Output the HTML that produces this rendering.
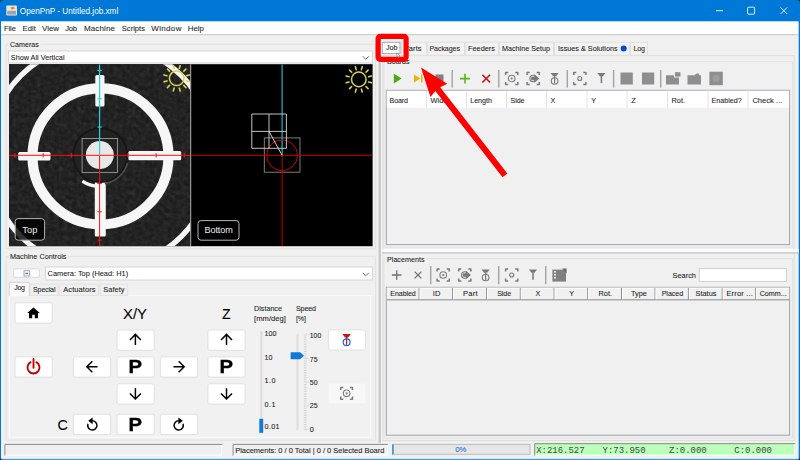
<!DOCTYPE html>
<html lang="en"><head><meta charset="utf-8"><title>OpenPnP - Untitled.job.xml</title>
<style>
html,body{margin:0;padding:0}
body{width:800px;height:460px;position:relative;overflow:hidden;background:#f0f0f0;font-family:"Liberation Sans",sans-serif}
.t{position:absolute;white-space:nowrap;z-index:3;-webkit-text-stroke:0.08px currentColor}
.m{font-family:"Liberation Mono",monospace}
.a{position:absolute}
svg{position:absolute;left:0;top:0}
</style></head><body>
<svg width="800" height="460" viewBox="0 0 800 460" style="z-index:1"><rect x="0.00" y="0.00" width="800.00" height="21.50" fill="#0078d7" />
<rect x="1.00" y="21.50" width="797.70" height="12.70" fill="#ffffff" />
<rect x="1.00" y="34.20" width="797.70" height="1.00" fill="#c6c6c6" />
<rect x="0.00" y="21.00" width="1.00" height="439.00" fill="#0078d7" />
<rect x="798.70" y="21.00" width="1.30" height="439.00" fill="#0078d7" />
<rect x="0.00" y="458.90" width="800.00" height="1.10" fill="#3d96e0" />
<rect x="6.30" y="5.60" width="10.70" height="10.00" fill="#e9e6e0" rx="1" />
<rect x="7.30" y="10.80" width="8.70" height="3.80" fill="#9aa3b2" />
<path d="M10.3 7.4 l3.2-1 1.5 2 -3.2 1.3z" fill="#f08a24"/>
<line x1="716.00" y1="10.70" x2="723.00" y2="10.70" stroke="#ffffff" stroke-width="0.9" />
<rect x="747.60" y="7.20" width="7.00" height="7.00" fill="none" stroke="#ffffff" stroke-width="0.9" rx="1" />
<path d="M780.6 7.4l6.6 6.6m0-6.6l-6.6 6.6" stroke="#fff" stroke-width="0.9" fill="none"/>
<rect x="378.60" y="36.00" width="2.60" height="407.00" fill="#c9c9c9" />
<rect x="381.20" y="36.00" width="1.00" height="407.00" fill="#fafafa" />
<path d="M8.5 44.2H6.2V248.8H375.6V44.2H40.5" fill="none" stroke="#e2e2e2" stroke-width="1"/>
<path d="M8.5 256.4H6.2V440.2H375.6V256.4H68" fill="none" stroke="#e2e2e2" stroke-width="1"/>
<rect x="8.60" y="51.00" width="364.00" height="11.90" fill="#ffffff" stroke="#d6d6d6" stroke-width="1" />
<path d="M362.8 56.3l3 3 3-3" fill="none" stroke="#555" stroke-width="0.9"/>
<rect x="45.40" y="267.00" width="327.20" height="13.00" fill="#ffffff" stroke="#d6d6d6" stroke-width="1" />
<path d="M362.8 272.8l3 3 3-3" fill="none" stroke="#555" stroke-width="0.9"/>
<rect x="13.60" y="268.80" width="25.80" height="8.60" fill="#fdfdfd" stroke="#dadada" stroke-width="1" rx="1.5" />
<rect x="24.00" y="270.70" width="5.40" height="5.30" fill="#f1f3f8" stroke="#8e98b0" stroke-width="0.8" />
<line x1="25.40" y1="273.40" x2="28.00" y2="273.40" stroke="#3a4a80" stroke-width="0.9" />
<rect x="9.30" y="295.60" width="361.30" height="141.70" fill="#f1f1f1" stroke="#fafafa" stroke-width="1.2" />
<rect x="30.00" y="284.20" width="28.20" height="11.20" fill="#f0f0f0" stroke="#e2e2e2" stroke-width="1" />
<rect x="59.60" y="284.20" width="39.00" height="11.20" fill="#f0f0f0" stroke="#e2e2e2" stroke-width="1" />
<rect x="100.00" y="284.20" width="27.60" height="11.20" fill="#f0f0f0" stroke="#e2e2e2" stroke-width="1" />
<path d="M9.3 296V282.3H29.3V296" fill="#fbfbfb" stroke="#d4d4d4" stroke-width="1"/>
<rect x="15.00" y="302.80" width="37.20" height="20.30" fill="#ffffff" stroke="#e0e0e0" stroke-width="1" rx="2" />
<rect x="15.00" y="356.80" width="37.20" height="20.30" fill="#ffffff" stroke="#e0e0e0" stroke-width="1" rx="2" />
<rect x="117.00" y="330.00" width="37.20" height="20.30" fill="#ffffff" stroke="#e0e0e0" stroke-width="1" rx="2" />
<rect x="73.40" y="356.80" width="37.20" height="20.30" fill="#ffffff" stroke="#e0e0e0" stroke-width="1" rx="2" />
<rect x="117.00" y="356.80" width="37.20" height="20.30" fill="#ffffff" stroke="#e0e0e0" stroke-width="1" rx="2" />
<rect x="160.40" y="356.80" width="37.20" height="20.30" fill="#ffffff" stroke="#e0e0e0" stroke-width="1" rx="2" />
<rect x="117.00" y="383.80" width="37.20" height="20.30" fill="#ffffff" stroke="#e0e0e0" stroke-width="1" rx="2" />
<rect x="73.40" y="414.30" width="37.20" height="20.30" fill="#ffffff" stroke="#e0e0e0" stroke-width="1" rx="2" />
<rect x="117.00" y="414.30" width="37.20" height="20.30" fill="#ffffff" stroke="#e0e0e0" stroke-width="1" rx="2" />
<rect x="160.40" y="414.30" width="37.20" height="20.30" fill="#ffffff" stroke="#e0e0e0" stroke-width="1" rx="2" />
<rect x="207.90" y="330.00" width="37.20" height="20.30" fill="#ffffff" stroke="#e0e0e0" stroke-width="1" rx="2" />
<rect x="207.90" y="356.80" width="37.20" height="20.30" fill="#ffffff" stroke="#e0e0e0" stroke-width="1" rx="2" />
<rect x="207.90" y="383.80" width="37.20" height="20.30" fill="#ffffff" stroke="#e0e0e0" stroke-width="1" rx="2" />
<rect x="328.40" y="329.80" width="37.20" height="20.30" fill="#ffffff" stroke="#e0e0e0" stroke-width="1" rx="2" />
<rect x="328.40" y="383.50" width="37.10" height="19.90" fill="#f8f8f8" rx="2" />
<path d="M33.5 307.4l-6.3 5.6h1.8v5.3h3.2v-3.6h2.6v3.6h3.2v-5.3h1.8z" fill="#000"/>
<path d="M30.6 362.2a6 6 0 1 0 5.8 0" fill="none" stroke="#c40000" stroke-width="1.9" stroke-linecap="round"/>
<line x1="33.50" y1="359.00" x2="33.50" y2="367.80" stroke="#c40000" stroke-width="1.9" stroke-linecap="round"/>
<path d="M135.4 345.1V334.70000000000005M129.9 339.90000000000003L135.4 334.40000000000003L140.9 339.90000000000003" fill="none" stroke="#000" stroke-width="1.45"/>
<path d="M135.4 388.3V398.7M129.9 393.5L135.4 399.0L140.9 393.5" fill="none" stroke="#000" stroke-width="1.45"/>
<path d="M97.5 366.8H87.1M92.3 361.3L86.8 366.8L92.3 372.3" fill="none" stroke="#000" stroke-width="1.45"/>
<path d="M173.5 366.8H183.9M178.7 361.3L184.2 366.8L178.7 372.3" fill="none" stroke="#000" stroke-width="1.45"/>
<path d="M226.5 345.1V334.70000000000005M221.0 339.90000000000003L226.5 334.40000000000003L232.0 339.90000000000003" fill="none" stroke="#000" stroke-width="1.45"/>
<path d="M226.5 388.3V398.7M221.0 393.5L226.5 399.0L232.0 393.5" fill="none" stroke="#000" stroke-width="1.45"/>
<path d="M92.2 420.79999999999995A4.6 4.6 0 1 1 88.0 423.79999999999995" fill="none" stroke="#000" stroke-width="1.5"/>
<path d="M92.6 417.4v6.8l-4.4-3.4z" fill="#000"/>
<path d="M178.8 420.79999999999995A4.6 4.6 0 1 0 183.0 423.79999999999995" fill="none" stroke="#000" stroke-width="1.5"/>
<path d="M178.4 417.4v6.8l4.4-3.4z" fill="#000"/>
<path d="M342.4 334h8.4l-2.6 3.4h-3.2z" fill="#cc1111"/>
<line x1="346.60" y1="337.00" x2="346.60" y2="344.80" stroke="#cc1111" stroke-width="1.3" />
<circle cx="346.6" cy="342.2" r="3.4" fill="none" stroke="#1565e0" stroke-width="1.2"/>
<path d="M340.70 390.00V387.40H343.30M340.70 396.60V399.20H343.30M352.50 390.00V387.40H349.90M352.50 396.60V399.20H349.90" fill="none" stroke="#7c7c7c" stroke-width="1.5" stroke-linejoin="round"/>
<circle cx="346.6" cy="393.3" r="3.3" fill="none" stroke="#7c7c7c" stroke-width="1.1"/>
<circle cx="346.6" cy="393.3" r="1.1" fill="#7c7c7c"/>
<rect x="260.20" y="331.50" width="2.20" height="101.30" fill="#dcdcdc" />
<rect x="259.30" y="418.80" width="3.90" height="14.00" fill="#0f7ad8" />
<rect x="296.40" y="334.30" width="2.20" height="95.90" fill="#dedede" />
<line x1="303.80" y1="334.90" x2="308.20" y2="334.90" stroke="#c2c2c2" stroke-width="0.7" />
<line x1="303.80" y1="337.26" x2="306.60" y2="337.26" stroke="#c2c2c2" stroke-width="0.7" />
<line x1="303.80" y1="339.62" x2="306.60" y2="339.62" stroke="#c2c2c2" stroke-width="0.7" />
<line x1="303.80" y1="341.99" x2="306.60" y2="341.99" stroke="#c2c2c2" stroke-width="0.7" />
<line x1="303.80" y1="344.35" x2="306.60" y2="344.35" stroke="#c2c2c2" stroke-width="0.7" />
<line x1="303.80" y1="346.71" x2="306.60" y2="346.71" stroke="#c2c2c2" stroke-width="0.7" />
<line x1="303.80" y1="349.07" x2="306.60" y2="349.07" stroke="#c2c2c2" stroke-width="0.7" />
<line x1="303.80" y1="351.44" x2="306.60" y2="351.44" stroke="#c2c2c2" stroke-width="0.7" />
<line x1="303.80" y1="353.80" x2="306.60" y2="353.80" stroke="#c2c2c2" stroke-width="0.7" />
<line x1="303.80" y1="356.16" x2="306.60" y2="356.16" stroke="#c2c2c2" stroke-width="0.7" />
<line x1="303.80" y1="358.52" x2="308.20" y2="358.52" stroke="#c2c2c2" stroke-width="0.7" />
<line x1="303.80" y1="360.89" x2="306.60" y2="360.89" stroke="#c2c2c2" stroke-width="0.7" />
<line x1="303.80" y1="363.25" x2="306.60" y2="363.25" stroke="#c2c2c2" stroke-width="0.7" />
<line x1="303.80" y1="365.61" x2="306.60" y2="365.61" stroke="#c2c2c2" stroke-width="0.7" />
<line x1="303.80" y1="367.97" x2="306.60" y2="367.97" stroke="#c2c2c2" stroke-width="0.7" />
<line x1="303.80" y1="370.34" x2="306.60" y2="370.34" stroke="#c2c2c2" stroke-width="0.7" />
<line x1="303.80" y1="372.70" x2="306.60" y2="372.70" stroke="#c2c2c2" stroke-width="0.7" />
<line x1="303.80" y1="375.06" x2="306.60" y2="375.06" stroke="#c2c2c2" stroke-width="0.7" />
<line x1="303.80" y1="377.42" x2="306.60" y2="377.42" stroke="#c2c2c2" stroke-width="0.7" />
<line x1="303.80" y1="379.79" x2="306.60" y2="379.79" stroke="#c2c2c2" stroke-width="0.7" />
<line x1="303.80" y1="382.15" x2="308.20" y2="382.15" stroke="#c2c2c2" stroke-width="0.7" />
<line x1="303.80" y1="384.51" x2="306.60" y2="384.51" stroke="#c2c2c2" stroke-width="0.7" />
<line x1="303.80" y1="386.88" x2="306.60" y2="386.88" stroke="#c2c2c2" stroke-width="0.7" />
<line x1="303.80" y1="389.24" x2="306.60" y2="389.24" stroke="#c2c2c2" stroke-width="0.7" />
<line x1="303.80" y1="391.60" x2="306.60" y2="391.60" stroke="#c2c2c2" stroke-width="0.7" />
<line x1="303.80" y1="393.96" x2="306.60" y2="393.96" stroke="#c2c2c2" stroke-width="0.7" />
<line x1="303.80" y1="396.32" x2="306.60" y2="396.32" stroke="#c2c2c2" stroke-width="0.7" />
<line x1="303.80" y1="398.69" x2="306.60" y2="398.69" stroke="#c2c2c2" stroke-width="0.7" />
<line x1="303.80" y1="401.05" x2="306.60" y2="401.05" stroke="#c2c2c2" stroke-width="0.7" />
<line x1="303.80" y1="403.41" x2="306.60" y2="403.41" stroke="#c2c2c2" stroke-width="0.7" />
<line x1="303.80" y1="405.77" x2="308.20" y2="405.77" stroke="#c2c2c2" stroke-width="0.7" />
<line x1="303.80" y1="408.14" x2="306.60" y2="408.14" stroke="#c2c2c2" stroke-width="0.7" />
<line x1="303.80" y1="410.50" x2="306.60" y2="410.50" stroke="#c2c2c2" stroke-width="0.7" />
<line x1="303.80" y1="412.86" x2="306.60" y2="412.86" stroke="#c2c2c2" stroke-width="0.7" />
<line x1="303.80" y1="415.22" x2="306.60" y2="415.22" stroke="#c2c2c2" stroke-width="0.7" />
<line x1="303.80" y1="417.59" x2="306.60" y2="417.59" stroke="#c2c2c2" stroke-width="0.7" />
<line x1="303.80" y1="419.95" x2="306.60" y2="419.95" stroke="#c2c2c2" stroke-width="0.7" />
<line x1="303.80" y1="422.31" x2="306.60" y2="422.31" stroke="#c2c2c2" stroke-width="0.7" />
<line x1="303.80" y1="424.67" x2="306.60" y2="424.67" stroke="#c2c2c2" stroke-width="0.7" />
<line x1="303.80" y1="427.04" x2="306.60" y2="427.04" stroke="#c2c2c2" stroke-width="0.7" />
<line x1="303.80" y1="429.40" x2="308.20" y2="429.40" stroke="#c2c2c2" stroke-width="0.7" />
<path d="M290.6 352.2h9.6l3.8 3.5-3.8 3.5h-9.6z" fill="#0f7ad8"/>
<rect x="382.80" y="55.60" width="411.40" height="385.00" fill="none" stroke="#dedede" stroke-width="1" />
<rect x="401.50" y="42.30" width="25.00" height="13.00" fill="#f2f2f2" stroke="#e0e0e0" stroke-width="1" />
<rect x="427.50" y="42.30" width="37.00" height="13.00" fill="#f2f2f2" stroke="#e0e0e0" stroke-width="1" />
<rect x="465.50" y="42.30" width="33.00" height="13.00" fill="#f2f2f2" stroke="#e0e0e0" stroke-width="1" />
<rect x="499.50" y="42.30" width="54.00" height="13.00" fill="#f2f2f2" stroke="#e0e0e0" stroke-width="1" />
<rect x="554.50" y="42.30" width="75.00" height="13.00" fill="#f2f2f2" stroke="#e0e0e0" stroke-width="1" />
<rect x="630.50" y="42.30" width="17.00" height="13.00" fill="#f2f2f2" stroke="#e0e0e0" stroke-width="1" />
<rect x="382.30" y="42.30" width="17.70" height="11.30" fill="#fcfcfc" stroke="#a9a9a9" stroke-width="1" />
<circle cx="623.7" cy="48.6" r="3" fill="#0b45d8"/>
<path d="M386.5 61.6H384V247.2H792.6V61.6H411" fill="none" stroke="#e2e2e2" stroke-width="1"/>
<path d="M393.8 73.8l7.8 4.8-7.8 4.9z" fill="#4aa814"/>
<path d="M414 74.4l6.4 4.1-6.4 4.1z" fill="#e4b800"/>
<rect x="421.00" y="74.40" width="1.50" height="8.20" fill="#e4b800" />
<rect x="435.50" y="74.50" width="8.00" height="8.00" fill="#7f7f7f" />
<rect x="451.50" y="70.00" width="1.40" height="17.60" fill="#a3a3a3" />
<rect x="498.10" y="70.00" width="1.40" height="17.60" fill="#a3a3a3" />
<rect x="566.60" y="70.00" width="1.40" height="17.60" fill="#a3a3a3" />
<rect x="612.90" y="70.00" width="1.40" height="17.60" fill="#a3a3a3" />
<rect x="660.00" y="70.00" width="1.40" height="17.60" fill="#a3a3a3" />
<path d="M460 78.6h10M465 73.7v9.8" stroke="#5ab517" stroke-width="1.6" fill="none"/>
<path d="M482.4 74.8l7.7 7.7m0-7.7l-7.7 7.7" stroke="#c5141d" stroke-width="1.6" fill="none"/>
<path d="M505.60 75.00V72.40H508.20M505.60 82.00V84.60H508.20M517.80 75.00V72.40H515.20M517.80 82.00V84.60H515.20" fill="none" stroke="#7a7a7a" stroke-width="1.5" stroke-linejoin="round"/>
<circle cx="511.7" cy="78.5" r="3.3" fill="none" stroke="#7a7a7a" stroke-width="1.1"/>
<circle cx="511.7" cy="78.5" r="1.1" fill="#7a7a7a"/>
<path d="M527.10 75.00V72.40H529.70M527.10 82.00V84.60H529.70M539.30 75.00V72.40H536.70M539.30 82.00V84.60H536.70" fill="none" stroke="#7a7a7a" stroke-width="1.5" stroke-linejoin="round"/>
<circle cx="533.2" cy="78.5" r="3.3" fill="none" stroke="#7a7a7a" stroke-width="1.1"/>
<path d="M534.2 74.2v2.6h-3v3.4h3v2.6l5.2-4.3z" fill="#7a7a7a"/>
<path d="M550.5 73h8.2l-2.6 3.3h-3z" fill="#7a7a7a"/>
<line x1="554.60" y1="76.00" x2="554.60" y2="83.40" stroke="#7a7a7a" stroke-width="1.2" />
<circle cx="554.6" cy="81" r="3.3" fill="none" stroke="#7a7a7a" stroke-width="1.1"/>
<path d="M573.70 75.00V72.40H576.30M573.70 82.00V84.60H576.30M585.90 75.00V72.40H583.30M585.90 82.00V84.60H583.30" fill="none" stroke="#7a7a7a" stroke-width="1.5" stroke-linejoin="round"/>
<circle cx="579.8" cy="78.5" r="2" fill="none" stroke="#7a7a7a" stroke-width="1.1"/>
<path d="M597.3 73h8.2l-2.6 3.3h-3z" fill="#7a7a7a"/>
<line x1="601.40" y1="76.00" x2="601.40" y2="83.20" stroke="#7a7a7a" stroke-width="1.5" />
<rect x="620.50" y="72.50" width="12.30" height="12.00" fill="#8e8e8e" />
<rect x="642.00" y="72.50" width="12.20" height="12.00" fill="#8e8e8e" />
<path d="M666 75.2h8v2.4h5v6.9h-13z" fill="#8e8e8e"/>
<rect x="675.00" y="72.20" width="5.50" height="4.40" fill="#8e8e8e" />
<path d="M687.5 75.2h7l2-1.6h2.5v1.6h2v9.3h-13.5z" fill="#8e8e8e"/>
<rect x="709.40" y="71.70" width="13.40" height="13.50" fill="#8e8e8e" />
<circle cx="716.1" cy="78.4" r="3.6" fill="#9c9c9c"/>
<rect x="386.30" y="90.30" width="403.30" height="154.30" fill="#f0f0f0" stroke="#9fa3ab" stroke-width="1" />
<rect x="386.80" y="90.80" width="402.30" height="17.00" fill="#ffffff" />
<rect x="426.20" y="90.80" width="1.00" height="17.00" fill="#e3e3e3" />
<rect x="466.00" y="90.80" width="1.00" height="17.00" fill="#e3e3e3" />
<rect x="506.10" y="90.80" width="1.00" height="17.00" fill="#e3e3e3" />
<rect x="546.10" y="90.80" width="1.00" height="17.00" fill="#e3e3e3" />
<rect x="586.50" y="90.80" width="1.00" height="17.00" fill="#e3e3e3" />
<rect x="626.50" y="90.80" width="1.00" height="17.00" fill="#e3e3e3" />
<rect x="667.10" y="90.80" width="1.00" height="17.00" fill="#e3e3e3" />
<rect x="707.50" y="90.80" width="1.00" height="17.00" fill="#e3e3e3" />
<rect x="747.50" y="90.80" width="1.00" height="17.00" fill="#e3e3e3" />
<rect x="382.20" y="249.00" width="416.50" height="3.40" fill="#fafafa" />
<rect x="382.20" y="252.40" width="416.50" height="1.10" fill="#bdbdbd" />
<path d="M386.5 258.6H384V438H792.6V258.6H427" fill="none" stroke="#e2e2e2" stroke-width="1"/>
<path d="M391.9 275h9.6M396.7 270.2v9.6" stroke="#6f6f6f" stroke-width="1.3" fill="none"/>
<path d="M414.6 271.6l6.8 6.8m0-6.8l-6.8 6.8" stroke="#6f6f6f" stroke-width="1.3" fill="none"/>
<rect x="430.00" y="266.00" width="1.40" height="18.20" fill="#a3a3a3" />
<rect x="498.00" y="266.00" width="1.40" height="18.20" fill="#a3a3a3" />
<rect x="545.00" y="266.00" width="1.40" height="18.20" fill="#a3a3a3" />
<path d="M437.10 271.50V268.90H439.70M437.10 278.50V281.10H439.70M449.30 271.50V268.90H446.70M449.30 278.50V281.10H446.70" fill="none" stroke="#7a7a7a" stroke-width="1.5" stroke-linejoin="round"/>
<circle cx="443.2" cy="275" r="3.3" fill="none" stroke="#7a7a7a" stroke-width="1.1"/>
<circle cx="443.2" cy="275" r="1.1" fill="#7a7a7a"/>
<path d="M458.70 271.50V268.90H461.30M458.70 278.50V281.10H461.30M470.90 271.50V268.90H468.30M470.90 278.50V281.10H468.30" fill="none" stroke="#7a7a7a" stroke-width="1.5" stroke-linejoin="round"/>
<circle cx="464.8" cy="275" r="3.3" fill="none" stroke="#7a7a7a" stroke-width="1.1"/>
<path d="M465.8 270.7v2.6h-3v3.4h3v2.6l5.2-4.3z" fill="#7a7a7a"/>
<path d="M481.5 269.5h8.2l-2.6 3.3h-3z" fill="#7a7a7a"/>
<line x1="485.60" y1="272.50" x2="485.60" y2="279.90" stroke="#7a7a7a" stroke-width="1.2" />
<circle cx="485.6" cy="277.5" r="3.3" fill="none" stroke="#7a7a7a" stroke-width="1.1"/>
<path d="M505.60 271.50V268.90H508.20M505.60 278.50V281.10H508.20M517.80 271.50V268.90H515.20M517.80 278.50V281.10H515.20" fill="none" stroke="#7a7a7a" stroke-width="1.5" stroke-linejoin="round"/>
<circle cx="511.7" cy="275" r="2" fill="none" stroke="#7a7a7a" stroke-width="1.1"/>
<path d="M528.9 269.5h8.2l-2.6 3.3h-3z" fill="#7a7a7a"/>
<line x1="533.00" y1="272.50" x2="533.00" y2="279.70" stroke="#7a7a7a" stroke-width="1.5" />
<rect x="552.40" y="269.60" width="13.60" height="12.00" fill="#808080" />
<path d="M562 268.6h4.6v4.6z" fill="#6a6a6a"/>
<rect x="554.00" y="271.00" width="2.00" height="1.60" fill="#e8e8e8" />
<rect x="554.00" y="274.00" width="2.00" height="1.60" fill="#e8e8e8" />
<rect x="554.00" y="277.00" width="2.00" height="1.60" fill="#e8e8e8" />
<rect x="699.20" y="268.60" width="87.20" height="12.80" fill="#ffffff" stroke="#cfcfcf" stroke-width="1" />
<rect x="386.30" y="287.30" width="403.30" height="147.90" fill="#f0f0f0" stroke="#9fa3ab" stroke-width="1" />
<rect x="386.80" y="287.80" width="402.30" height="12.00" fill="#f1f1f1" />
<rect x="386.80" y="299.30" width="402.30" height="1.00" fill="#8c8c8c" />
<rect x="386.80" y="287.80" width="402.30" height="0.80" fill="#ffffff" />
<rect x="418.60" y="288.00" width="1.00" height="12.00" fill="#8c8c8c" />
<rect x="419.60" y="288.00" width="0.90" height="11.40" fill="#ffffff" />
<rect x="452.10" y="288.00" width="1.00" height="12.00" fill="#8c8c8c" />
<rect x="453.10" y="288.00" width="0.90" height="11.40" fill="#ffffff" />
<rect x="486.10" y="288.00" width="1.00" height="12.00" fill="#8c8c8c" />
<rect x="487.10" y="288.00" width="0.90" height="11.40" fill="#ffffff" />
<rect x="519.80" y="288.00" width="1.00" height="12.00" fill="#8c8c8c" />
<rect x="520.80" y="288.00" width="0.90" height="11.40" fill="#ffffff" />
<rect x="553.60" y="288.00" width="1.00" height="12.00" fill="#8c8c8c" />
<rect x="554.60" y="288.00" width="0.90" height="11.40" fill="#ffffff" />
<rect x="587.20" y="288.00" width="1.00" height="12.00" fill="#8c8c8c" />
<rect x="588.20" y="288.00" width="0.90" height="11.40" fill="#ffffff" />
<rect x="621.00" y="288.00" width="1.00" height="12.00" fill="#8c8c8c" />
<rect x="622.00" y="288.00" width="0.90" height="11.40" fill="#ffffff" />
<rect x="654.50" y="288.00" width="1.00" height="12.00" fill="#8c8c8c" />
<rect x="655.50" y="288.00" width="0.90" height="11.40" fill="#ffffff" />
<rect x="687.90" y="288.00" width="1.00" height="12.00" fill="#8c8c8c" />
<rect x="688.90" y="288.00" width="0.90" height="11.40" fill="#ffffff" />
<rect x="721.70" y="288.00" width="1.00" height="12.00" fill="#8c8c8c" />
<rect x="722.70" y="288.00" width="0.90" height="11.40" fill="#ffffff" />
<rect x="755.20" y="288.00" width="1.00" height="12.00" fill="#8c8c8c" />
<rect x="756.20" y="288.00" width="0.90" height="11.40" fill="#ffffff" />
<rect x="4.40" y="443.90" width="217.90" height="11.70" fill="#f0f0f0" />
<path d="M4.9 455.6V444.4H222.3" fill="none" stroke="#8a8a8a" stroke-width="1"/>
<path d="M5.4 455.1H221.8V444.9" fill="none" stroke="#ffffff" stroke-width="1"/>
<rect x="232.60" y="443.90" width="155.40" height="11.70" fill="#f0f0f0" />
<path d="M233.1 455.6V444.4H388" fill="none" stroke="#8a8a8a" stroke-width="1"/>
<path d="M233.6 455.1H387.5V444.9" fill="none" stroke="#ffffff" stroke-width="1"/>
<rect x="392.60" y="444.40" width="137.40" height="9.90" fill="#e6e6e6" stroke="#bcbcbc" stroke-width="1" />
<rect x="392.40" y="444.40" width="1.20" height="9.90" fill="#1179d6" />
<rect x="534.20" y="443.20" width="261.00" height="12.40" fill="#bbffbb" />
<path d="M534.7 455.6V443.7H795.2" fill="none" stroke="#8a8a8a" stroke-width="1"/>
<path d="M535.2 455.1H794.7V444.2" fill="none" stroke="#ffffff" stroke-width="1"/>
<path d="M0 0h3.4A3.4 3.4 0 0 0 0 3.4z" fill="#2b2b2b"/>
<path d="M800 0h-3.4A3.4 3.4 0 0 1 800 3.4z" fill="#2b2b2b"/>
<path d="M0 460h3.4A3.4 3.4 0 0 1 0 456.6z" fill="#2b2b2b"/>
<path d="M800 460h-3.4A3.4 3.4 0 0 0 800 456.6z" fill="#2b2b2b"/></svg>
<svg width="800" height="460" viewBox="0 0 800 460" style="z-index:2"><defs><filter id="nz" x="0" y="0" width="100%" height="100%"><feTurbulence type="fractalNoise" baseFrequency="0.22" numOctaves="2" seed="3" result="n"/><feColorMatrix in="n" type="matrix" values="0 0 0 0 0.5  0 0 0 0 0.5  0 0 0 0 0.5  0.12 0.12 0.12 0 -0.13"/></filter><filter id="bl" x="-5%" y="-5%" width="110%" height="110%"><feGaussianBlur stdDeviation="0.55"/></filter><clipPath id="c1"><rect x="9" y="64.2" width="181.2" height="182"/></clipPath><clipPath id="c2"><rect x="191" y="64.2" width="181.6" height="182"/></clipPath></defs>
<rect x="9" y="64.2" width="363.6" height="182" fill="#000"/>
<g clip-path="url(#c1)">
<rect x="9" y="64.2" width="181.2" height="182" fill="#1b1b1b"/>
<rect x="9" y="64.2" width="181.2" height="182" fill="#fff" filter="url(#nz)"/>
<g filter="url(#bl)">
<circle cx="101.1" cy="156.0" r="113.6" fill="none" stroke="#f6f6f6" stroke-width="5.3"/>
<circle cx="100.5" cy="156.4" r="68" fill="none" stroke="#f6f6f6" stroke-width="10.2"/>
<rect x="95.3" y="75" width="9.2" height="31.6" rx="1.5" fill="#f6f6f6"/>
<rect x="18.2" y="151.9" width="32.3" height="8.5" rx="1.5" fill="#f6f6f6"/>
<rect x="128.4" y="150.9" width="52.8" height="9.4" rx="1.5" fill="#f6f6f6"/>
<rect x="94.8" y="181" width="11" height="55.6" rx="1.5" fill="#f6f6f6"/>
<circle cx="100.19999999999999" cy="155.3" r="27" fill="#222222" stroke="#131313" stroke-width="1.5"/>
<path d="M82.4 181.2A31 31 0 0 0 97 186.4" fill="none" stroke="#f6f6f6" stroke-width="3.4"/>
<path d="M104.8 183.6A28.8 28.8 0 0 0 127.6 163" fill="none" stroke="#4c4c4c" stroke-width="1.6"/>
<circle cx="99.8" cy="155.10000000000002" r="14" fill="#e8e8e8"/>
</g>
<rect x="82.1" y="138.5" width="35.3" height="33.9" fill="none" stroke="#9a9a9a" stroke-width="0.9"/>
<line x1="9.00" y1="155.30" x2="190.20" y2="155.30" stroke="#ff1212" stroke-width="1" />
<line x1="99.60" y1="155.30" x2="99.60" y2="246.20" stroke="#ff1212" stroke-width="1" />
<line x1="99.60" y1="64.20" x2="99.60" y2="155.30" stroke="#21d4e4" stroke-width="1.2" />
<line x1="71.35" y1="153.10" x2="71.35" y2="157.50" stroke="#ff1212" stroke-width="1" />
<line x1="127.85" y1="153.10" x2="127.85" y2="157.50" stroke="#ff1212" stroke-width="1" />
<line x1="97.40" y1="183.55" x2="101.80" y2="183.55" stroke="#ff1212" stroke-width="1" />
<line x1="97.40" y1="127.05" x2="101.80" y2="127.05" stroke="#21d4e4" stroke-width="1" />
<line x1="43.10" y1="153.10" x2="43.10" y2="157.50" stroke="#ff1212" stroke-width="1" />
<line x1="156.10" y1="153.10" x2="156.10" y2="157.50" stroke="#ff1212" stroke-width="1" />
<line x1="97.40" y1="211.80" x2="101.80" y2="211.80" stroke="#ff1212" stroke-width="1" />
<line x1="97.40" y1="98.80" x2="101.80" y2="98.80" stroke="#21d4e4" stroke-width="1" />
<line x1="14.85" y1="153.10" x2="14.85" y2="157.50" stroke="#ff1212" stroke-width="1" />
<line x1="184.35" y1="153.10" x2="184.35" y2="157.50" stroke="#ff1212" stroke-width="1" />
<line x1="97.40" y1="240.05" x2="101.80" y2="240.05" stroke="#ff1212" stroke-width="1" />
<line x1="97.40" y1="70.55" x2="101.80" y2="70.55" stroke="#21d4e4" stroke-width="1" />
</g>
<rect x="190.20" y="64.20" width="1.00" height="182.00" fill="#b5b5b5" />
<g clip-path="url(#c2)">
<rect x="264.3" y="137.9" width="35.7" height="34.3" fill="none" stroke="#8a8a8a" stroke-width="0.9"/>
<line x1="191.00" y1="155.30" x2="372.60" y2="155.30" stroke="#c40000" stroke-width="1" />
<line x1="282.10" y1="155.30" x2="282.10" y2="246.20" stroke="#c40000" stroke-width="1" />
<line x1="282.10" y1="64.20" x2="282.10" y2="155.30" stroke="#18b8c8" stroke-width="1.2" />
<circle cx="282.1" cy="155.3" r="15.4" fill="none" stroke="#c40000" stroke-width="1"/>
<path d="M251.8 114h34.6v34.3h-34.6zM269 114v34.3M251.8 131.4h34.6" fill="none" stroke="#d6d6d6" stroke-width="0.9"/>
<line x1="269.00" y1="131.40" x2="282.10" y2="155.30" stroke="#e0e0e0" stroke-width="0.9" />
</g>
<circle cx="176.7" cy="78.3" r="7.3" fill="none" stroke="#d9d258" stroke-width="1.5"/>
<path d="M186.46 80.91L189.35 81.69M183.84 85.44L185.96 87.56M179.31 88.06L180.09 90.95M174.09 88.06L173.31 90.95M169.56 85.44L167.44 87.56M166.94 80.91L164.05 81.69M166.94 75.69L164.05 74.91M169.56 71.16L167.44 69.04M174.09 68.54L173.31 65.65M179.31 68.54L180.09 65.65M183.84 71.16L185.96 69.04M186.46 75.69L189.35 74.91" stroke="#d9d258" stroke-width="1.6" stroke-linecap="round" fill="none"/>
<circle cx="358.8" cy="79.4" r="7.3" fill="none" stroke="#d9d258" stroke-width="1.5"/>
<path d="M368.56 82.01L371.45 82.79M365.94 86.54L368.06 88.66M361.41 89.16L362.19 92.05M356.19 89.16L355.41 92.05M351.66 86.54L349.54 88.66M349.04 82.01L346.15 82.79M349.04 76.79L346.15 76.01M351.66 72.26L349.54 70.14M356.19 69.64L355.41 66.75M361.41 69.64L362.19 66.75M365.94 72.26L368.06 70.14M368.56 76.79L371.45 76.01" stroke="#d9d258" stroke-width="1.6" stroke-linecap="round" fill="none"/>
<rect x="15.20" y="218.60" width="29.40" height="21.60" fill="rgba(0,0,0,0.8)" stroke="#b4b4b4" stroke-width="1" rx="3" />
<rect x="198.00" y="220.60" width="41.00" height="19.60" fill="rgba(0,0,0,0.8)" stroke="#b4b4b4" stroke-width="1" rx="3" /></svg>
<span class="t" style="left:19.80px;top:6.10px;font-size:8.19px;line-height:12px;color:#fff;letter-spacing:0.000px;-webkit-text-stroke:0;">OpenPnP - Untitled.job.xml</span>
<span class="t" style="left:3.90px;top:22.80px;font-size:7.57px;line-height:12px;color:#1c1c1c;letter-spacing:-0.034px;">File</span>
<span class="t" style="left:22.60px;top:22.80px;font-size:7.66px;line-height:12px;color:#1c1c1c;letter-spacing:0.000px;">Edit</span>
<span class="t" style="left:42.00px;top:22.80px;font-size:7.91px;line-height:12px;color:#1c1c1c;letter-spacing:0.000px;">View</span>
<span class="t" style="left:65.20px;top:22.80px;font-size:7.57px;line-height:12px;color:#1c1c1c;letter-spacing:-0.200px;">Job</span>
<span class="t" style="left:83.90px;top:22.80px;font-size:8.03px;line-height:12px;color:#1c1c1c;letter-spacing:0.122px;">Machine</span>
<span class="t" style="left:121.80px;top:22.80px;font-size:7.59px;line-height:12px;color:#1c1c1c;letter-spacing:0.000px;">Scripts</span>
<span class="t" style="left:151.30px;top:22.80px;font-size:8.03px;line-height:12px;color:#1c1c1c;letter-spacing:0.327px;">Window</span>
<span class="t" style="left:187.80px;top:22.80px;font-size:7.87px;line-height:12px;color:#1c1c1c;letter-spacing:0.000px;">Help</span>
<span class="t" style="left:10.00px;top:39.10px;font-size:7.10px;line-height:12px;color:#1c1c1c;letter-spacing:0.000px;">Cameras</span>
<span class="t" style="left:10.80px;top:52.00px;font-size:7.27px;line-height:12px;color:#1c1c1c;letter-spacing:0.000px;">Show All Vertical</span>
<span class="t" style="left:10.00px;top:251.00px;font-size:7.26px;line-height:12px;color:#1c1c1c;letter-spacing:0.000px;">Machine Controls</span>
<span class="t" style="left:47.60px;top:267.90px;font-size:7.42px;line-height:12px;color:#1c1c1c;letter-spacing:0.000px;">Camera: Top (Head: H1)</span>
<span class="t" style="left:14.30px;top:282.30px;font-size:7.08px;line-height:12px;color:#1c1c1c;letter-spacing:-0.356px;">Jog</span>
<span class="t" style="left:33.00px;top:284.40px;font-size:7.08px;line-height:12px;color:#1c1c1c;letter-spacing:-0.120px;">Special</span>
<span class="t" style="left:63.30px;top:284.40px;font-size:7.52px;line-height:12px;color:#1c1c1c;letter-spacing:0.056px;">Actuators</span>
<span class="t" style="left:103.30px;top:284.40px;font-size:7.48px;line-height:12px;color:#1c1c1c;letter-spacing:0.000px;">Safety</span>
<span class="t" style="left:123.00px;top:307.70px;font-size:14.89px;line-height:12px;color:#000;letter-spacing:0.000px;">X/Y</span>
<span class="t" style="left:222.00px;top:307.50px;font-size:14.16px;line-height:12px;color:#000;letter-spacing:0.000px;">Z</span>
<span class="t" style="left:57.40px;top:418.80px;font-size:14.40px;line-height:12px;color:#000;letter-spacing:0.000px;">C</span>
<span class="t" style="left:129.15px;top:360.50px;font-size:18.43px;line-height:12px;color:#000;letter-spacing:0.000px;font-weight:bold;transform:scaleX(1.1);-webkit-text-stroke:0.35px #000;">P</span>
<span class="t" style="left:129.15px;top:418.50px;font-size:18.43px;line-height:12px;color:#000;letter-spacing:0.000px;font-weight:bold;transform:scaleX(1.1);-webkit-text-stroke:0.35px #000;">P</span>
<span class="t" style="left:220.35px;top:360.70px;font-size:18.43px;line-height:12px;color:#000;letter-spacing:0.000px;font-weight:bold;transform:scaleX(1.1);-webkit-text-stroke:0.35px #000;">P</span>
<span class="t" style="left:254.00px;top:302.80px;font-size:7.20px;line-height:12px;color:#1c1c1c;letter-spacing:0.000px;">Distance</span>
<span class="t" style="left:254.00px;top:312.60px;font-size:7.62px;line-height:12px;color:#1c1c1c;letter-spacing:0.038px;">[mm/deg]</span>
<span class="t" style="left:296.00px;top:302.80px;font-size:7.18px;line-height:12px;color:#1c1c1c;letter-spacing:-0.183px;">Speed</span>
<span class="t" style="left:296.00px;top:312.60px;font-size:7.18px;line-height:12px;color:#1c1c1c;letter-spacing:-0.183px;">[%]</span>
<span class="t" style="left:264.60px;top:328.30px;font-size:7.13px;line-height:12px;color:#1c1c1c;letter-spacing:0.000px;">100</span>
<span class="t" style="left:264.60px;top:351.60px;font-size:7.09px;line-height:12px;color:#1c1c1c;letter-spacing:-0.000px;">10</span>
<span class="t" style="left:264.60px;top:375.30px;font-size:7.21px;line-height:12px;color:#1c1c1c;letter-spacing:0.437px;">1.0</span>
<span class="t" style="left:264.60px;top:398.60px;font-size:7.21px;line-height:12px;color:#1c1c1c;letter-spacing:0.437px;">0.1</span>
<span class="t" style="left:264.60px;top:421.20px;font-size:7.21px;line-height:12px;color:#1c1c1c;letter-spacing:0.289px;">0.01</span>
<span class="t" style="left:309.80px;top:330.00px;font-size:6.89px;line-height:12px;color:#1c1c1c;letter-spacing:0.000px;">100</span>
<span class="t" style="left:309.80px;top:353.70px;font-size:6.91px;line-height:12px;color:#1c1c1c;letter-spacing:0.000px;">75</span>
<span class="t" style="left:309.80px;top:377.00px;font-size:6.91px;line-height:12px;color:#1c1c1c;letter-spacing:0.000px;">50</span>
<span class="t" style="left:309.80px;top:400.30px;font-size:6.91px;line-height:12px;color:#1c1c1c;letter-spacing:0.000px;">25</span>
<span class="t" style="left:309.80px;top:424.00px;font-size:7.17px;line-height:12px;color:#1c1c1c;letter-spacing:0.000px;">0</span>
<span class="t" style="left:386.00px;top:42.40px;font-size:7.14px;line-height:12px;color:#1c1c1c;letter-spacing:0.000px;">Job</span>
<span class="t" style="left:403.80px;top:43.20px;font-size:7.52px;line-height:12px;color:#1c1c1c;letter-spacing:0.064px;">Parts</span>
<span class="t" style="left:429.40px;top:43.20px;font-size:7.08px;line-height:12px;color:#1c1c1c;letter-spacing:-0.069px;">Packages</span>
<span class="t" style="left:468.00px;top:43.20px;font-size:7.36px;line-height:12px;color:#1c1c1c;letter-spacing:0.000px;">Feeders</span>
<span class="t" style="left:502.00px;top:43.20px;font-size:7.20px;line-height:12px;color:#1c1c1c;letter-spacing:0.000px;">Machine Setup</span>
<span class="t" style="left:558.00px;top:43.20px;font-size:7.25px;line-height:12px;color:#1c1c1c;letter-spacing:0.000px;">Issues &amp; Solutions</span>
<span class="t" style="left:633.60px;top:43.20px;font-size:7.08px;line-height:12px;color:#1c1c1c;letter-spacing:-0.211px;">Log</span>
<span class="t" style="left:387.00px;top:56.20px;font-size:7.10px;line-height:12px;color:#1c1c1c;letter-spacing:0.000px;">Boards</span>
<span class="t" style="left:389.60px;top:95.10px;font-size:7.08px;line-height:12px;color:#1c1c1c;letter-spacing:-0.125px;">Board</span>
<span class="t" style="left:430.60px;top:95.10px;font-size:7.40px;line-height:12px;color:#1c1c1c;letter-spacing:0.000px;">Width</span>
<span class="t" style="left:470.20px;top:95.10px;font-size:7.13px;line-height:12px;color:#1c1c1c;letter-spacing:0.000px;">Length</span>
<span class="t" style="left:510.60px;top:95.10px;font-size:7.08px;line-height:12px;color:#1c1c1c;letter-spacing:-0.124px;">Side</span>
<span class="t" style="left:550.60px;top:95.10px;font-size:7.08px;line-height:12px;color:#1c1c1c;letter-spacing:0.000px;">X</span>
<span class="t" style="left:591.20px;top:95.10px;font-size:7.19px;line-height:12px;color:#1c1c1c;letter-spacing:0.000px;">Y</span>
<span class="t" style="left:631.30px;top:95.10px;font-size:7.52px;line-height:12px;color:#1c1c1c;letter-spacing:0.000px;">Z</span>
<span class="t" style="left:671.60px;top:95.10px;font-size:7.31px;line-height:12px;color:#1c1c1c;letter-spacing:0.000px;">Rot.</span>
<span class="t" style="left:711.60px;top:95.10px;font-size:7.10px;line-height:12px;color:#1c1c1c;letter-spacing:0.000px;">Enabled?</span>
<span class="t" style="left:752.40px;top:95.10px;font-size:7.52px;line-height:12px;color:#1c1c1c;letter-spacing:0.042px;">Check ...</span>
<span class="t" style="left:387.00px;top:253.50px;font-size:7.18px;line-height:12px;color:#1c1c1c;letter-spacing:0.000px;">Placements</span>
<span class="t" style="left:672.60px;top:269.80px;font-size:7.39px;line-height:12px;color:#1c1c1c;letter-spacing:0.000px;">Search</span>
<span class="t" style="left:390.35px;top:288.40px;font-size:7.08px;line-height:12px;color:#1c1c1c;letter-spacing:-0.096px;">Enabled</span>
<span class="t" style="left:432.75px;top:288.40px;font-size:7.52px;line-height:12px;color:#1c1c1c;letter-spacing:0.068px;">ID</span>
<span class="t" style="left:463.05px;top:288.40px;font-size:7.52px;line-height:12px;color:#1c1c1c;letter-spacing:0.236px;">Part</span>
<span class="t" style="left:497.15px;top:288.40px;font-size:7.08px;line-height:12px;color:#1c1c1c;letter-spacing:-0.057px;">Side</span>
<span class="t" style="left:535.60px;top:288.40px;font-size:7.08px;line-height:12px;color:#1c1c1c;letter-spacing:0.000px;">X</span>
<span class="t" style="left:569.20px;top:288.40px;font-size:7.19px;line-height:12px;color:#1c1c1c;letter-spacing:0.000px;">Y</span>
<span class="t" style="left:598.55px;top:288.40px;font-size:7.36px;line-height:12px;color:#1c1c1c;letter-spacing:0.000px;">Rot.</span>
<span class="t" style="left:630.95px;top:288.40px;font-size:7.38px;line-height:12px;color:#1c1c1c;letter-spacing:0.000px;">Type</span>
<span class="t" style="left:661.65px;top:288.40px;font-size:7.08px;line-height:12px;color:#1c1c1c;letter-spacing:-0.029px;">Placed</span>
<span class="t" style="left:695.50px;top:288.40px;font-size:7.41px;line-height:12px;color:#1c1c1c;letter-spacing:0.000px;">Status</span>
<span class="t" style="left:726.40px;top:288.40px;font-size:7.52px;line-height:12px;color:#1c1c1c;letter-spacing:0.180px;">Error ...</span>
<span class="t" style="left:759.65px;top:288.40px;font-size:7.15px;line-height:12px;color:#1c1c1c;letter-spacing:0.000px;">Comm...</span>
<span class="t" style="left:235.20px;top:444.70px;font-size:7.47px;line-height:12px;color:#1c1c1c;letter-spacing:0.000px;">Placements: 0 / 0 Total | 0 / 0 Selected Board</span>
<span class="t" style="left:455.20px;top:443.70px;font-size:7.95px;line-height:12px;color:#1673d0;letter-spacing:-0.288px;">0%</span>
<span class="t m" style="left:536.20px;top:444.90px;font-size:8.98px;line-height:12px;color:#484848;letter-spacing:0.000px;-webkit-text-stroke:0;">X:216.527</span>
<span class="t m" style="left:602.50px;top:444.90px;font-size:8.98px;line-height:12px;color:#484848;letter-spacing:0.000px;-webkit-text-stroke:0;">Y:73.950</span>
<span class="t m" style="left:669.00px;top:444.90px;font-size:8.98px;line-height:12px;color:#484848;letter-spacing:0.000px;-webkit-text-stroke:0;">Z:0.000</span>
<span class="t m" style="left:734.30px;top:444.90px;font-size:8.98px;line-height:12px;color:#484848;letter-spacing:0.000px;-webkit-text-stroke:0;">C:0.000</span>
<span class="t" style="left:22.30px;top:224.10px;font-size:9.32px;line-height:12px;color:#ececec;letter-spacing:0.000px;-webkit-text-stroke:0;">Top</span>
<span class="t" style="left:204.60px;top:224.10px;font-size:9.12px;line-height:12px;color:#ececec;letter-spacing:-0.142px;-webkit-text-stroke:0;">Bottom</span>
<svg width="800" height="460" viewBox="0 0 800 460" style="z-index:5"><rect x="378.1" y="36.4" width="28" height="22.9" rx="2.2" fill="none" stroke="#ff0000" stroke-width="5.2"/>
<polygon points="421.00,67.50 447.17,83.87 440.17,87.17 507.34,173.48 502.53,177.23 435.36,90.91 430.44,96.89" fill="#ff0000"/>
<path d="M396.8 52.6v4.8l1.1-1 0.8 1.7 0.7-0.3-0.8-1.7h1.5z" fill="#fff" stroke="#444" stroke-width="0.45"/></svg>
</body></html>
